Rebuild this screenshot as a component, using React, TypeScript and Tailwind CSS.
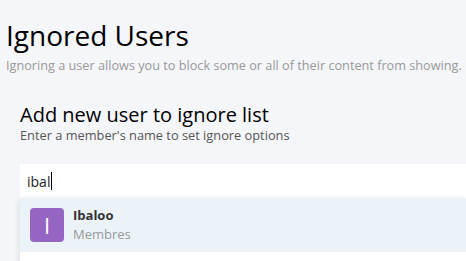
import React from 'react';

const font = { fontFamily: '"Open Sans", "Noto Sans", sans-serif' };

export default function App() {
  return (
    <div className="w-[466px] h-[261px] overflow-hidden bg-[#f5f6fa]" style={font}>
      <div className="pl-[6px] pt-[17px]">
        <h1 className="text-[28px] leading-[36px] text-black">Ignored Users</h1>
        <p className="text-[12.7px] leading-[18px] text-[#999] whitespace-nowrap mt-[3px]">
          Ignoring a user allows you to block some or all of their content from showing.
        </p>
      </div>

      <div className="pl-[20px] pt-[29px]">
        <h2 className="text-[20px] leading-[24px] text-black">Add new user to ignore list</h2>
        <p className="text-[12.8px] leading-[17px] text-[#555]">Enter a member's name to set ignore options</p>

        <div className="mt-[20px] relative">
          <div className="bg-white h-[34px] flex items-center pl-[7px]">
            <span className="text-[14px] text-[#222]">ibal</span>
            <span className="w-[1px] h-[18px] bg-black ml-[1px]" />
          </div>
          <div className="bg-white shadow-[0_2px_8px_rgba(0,0,0,0.12)]">
            <div className="bg-[#ebf3f9] h-[54px] flex items-center pl-[10px] gap-[9px]">
              <div className="w-[34px] h-[34px] rounded-[4px] bg-[#9565c3] flex items-center justify-center text-white text-[22px] leading-none">
                I
              </div>
              <div className="flex flex-col">
                <span className="text-[13px] leading-[19px] font-bold text-[#333]">Ibaloo</span>
                <span className="text-[13px] leading-[19px] text-[#999]">Membres</span>
              </div>
            </div>
            <div className="h-[20px]" />
          </div>
        </div>
      </div>
    </div>
  );
}
